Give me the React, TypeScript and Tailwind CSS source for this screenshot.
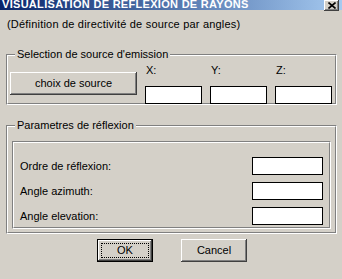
import React from "react";

const bevel =
  "shadow-[inset_-1px_-1px_#404040,inset_1px_1px_#ffffff,inset_-2px_-2px_#808080,inset_2px_2px_#d4d0c8]";

function Etched({ className, children }: { className?: string; children?: React.ReactNode }) {
  return (
    <div className={`relative border border-t-[#808080] border-l-[#808080] border-r-white border-b-white ${className ?? ""}`}>
      <div className="relative h-full w-full border border-t-white border-l-white border-r-[#808080] border-b-[#808080]">
        {children}
      </div>
    </div>
  );
}

function Field({ className }: { className?: string }) {
  return <div className={`bg-white border border-black ${className ?? ""}`} />;
}

export default function App() {
  return (
    <div className="relative flex h-[279px] w-[342px] flex-col overflow-hidden bg-[#d4d0c8] font-['Liberation_Sans',Arial,sans-serif] text-[11px] leading-[13px] text-black">
      {/* title bar */}
      <div className="flex h-[10px] shrink-0 items-start justify-between bg-gradient-to-r from-[#0a246a] to-[#a6caf0]">
        <div className="-mt-[2px] pl-[2px] text-[11px] font-bold leading-[12px] tracking-[0.3px] text-white whitespace-nowrap">
          VISUALISATION DE REFLEXION DE RAYONS
        </div>
        <div className={`mr-[3px] flex h-[11px] w-[15px] items-center justify-center bg-[#d4d0c8] ${bevel}`}>
          <svg width="8" height="7" viewBox="0 0 8 7">
            <path d="M0.5 0.5 L7.5 6.5 M7.5 0.5 L0.5 6.5" stroke="#000" strokeWidth="1.6" />
          </svg>
        </div>
      </div>

      {/* subtitle */}
      <div className="mt-[8px] pl-[7px] whitespace-nowrap tracking-[0.2px]">(Définition de directivité de source par angles)</div>

      {/* group 1 */}
      <Etched className="ml-[6px] mt-[23px] h-[51px] w-[331px] shrink-0">
        <div className="absolute left-[7px] top-[-8px] bg-[#d4d0c8] px-[2px] whitespace-nowrap">
          Selection de source d'emission
        </div>
        <div className="flex items-start pl-[2px]">
          <div className={`mt-[16px] flex h-[23px] w-[127px] items-center justify-center bg-[#d4d0c8] ${bevel}`}>
            choix de source
          </div>
          <div className="ml-[8px] flex gap-[8px]">
            {["X:", "Y:", "Z:"].map((l) => (
              <div key={l} className="flex w-[57px] flex-col">
                <div className="mt-[8px] pl-[1px]">{l}</div>
                <Field className="mt-[9px] h-[18px] w-[57px]" />
              </div>
            ))}
          </div>
        </div>
      </Etched>

      {/* group 2 */}
      <Etched className="ml-[6px] mt-[20px] h-[109px] w-[331px] shrink-0">
        <div className="absolute left-[7px] top-[-8px] bg-[#d4d0c8] px-[2px] whitespace-nowrap">
          Parametres de réflexion
        </div>
        <Etched className="mx-[4px] mt-[14px] h-[88px]">
          <div className="flex flex-col gap-[7px] pl-[6px] pr-[6px] pt-[14px]">
            {["Ordre de réflexion:", "Angle azimuth:", "Angle elevation:"].map((l) => (
              <div key={l} className="flex h-[18px] items-center justify-between">
                <span>{l}</span>
                <Field className="h-[18px] w-[71px]" />
              </div>
            ))}
          </div>
        </Etched>
      </Etched>

      {/* buttons */}
      <div className="mt-[5px] flex pl-[97px]">
        <div className="h-[23px] w-[56px] border border-black">
          <div className={`flex h-full w-full items-center justify-center bg-[#d4d0c8] ${bevel}`}>
            <div className="flex h-[15px] w-[48px] items-center justify-center border border-dotted border-black">
              OK
            </div>
          </div>
        </div>
        <div className={`ml-[28px] flex h-[23px] w-[66px] items-center justify-center bg-[#d4d0c8] ${bevel}`}>
          Cancel
        </div>
      </div>
    </div>
  );
}
